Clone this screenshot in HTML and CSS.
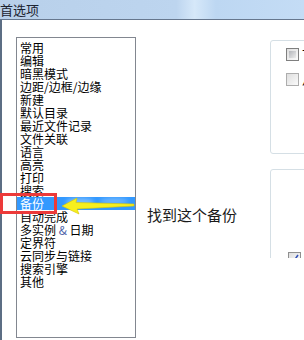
FILE: index.html
```html
<!DOCTYPE html>
<html>
  <head>
    <meta charset="UTF-8" />
    <title>首选项</title>
    <link rel="stylesheet" href="styles.css">
  </head>
  <body>
    <div class="window">
      <div class="titlebar">首选项</div>
      <div class="main">
        <ul class="list">
          <li>常用</li>
          <li>编辑</li>
          <li>暗黑模式</li>
          <li>边距/边框/边缘</li>
          <li>新建</li>
          <li>默认目录</li>
          <li>最近文件记录</li>
          <li>文件关联</li>
          <li>语言</li>
          <li>高亮</li>
          <li>打印</li>
          <li>搜索</li>
          <li class="selected">备份</li>
          <li>自动完成</li>
          <li>多实例 <span class="amp">&amp;</span> 日期</li>
          <li>定界符</li>
          <li>云同步与链接</li>
          <li>搜索引擎</li>
          <li>其他</li>
        </ul>
        <div class="note">找到这个备份</div>
        <div class="panel">
          <div class="group first">
            <div class="row"><span class="cb hot"></span><span class="label">下次启动时</span></div>
            <div class="row"><span class="cb"></span><span class="label">从备份恢复</span></div>
          </div>
          <div class="group second">
            <div class="row"><span class="cb checked">
              <svg width="11" height="11" viewBox="0 0 11 11"><path d="M2 5.5 L4.5 8.5 L9 2" fill="none" stroke="#3553b8" stroke-width="1.6" /></svg>
            </span><span class="label">启用备份</span></div>
          </div>
        </div>
      </div>

      <!-- 标注 -->
      <div class="mark"></div>
      <svg class="arrow" width="80" height="24" viewBox="0 0 80 24">
        <defs>
          <filter id="soft"><feGaussianBlur stdDeviation="2" /></filter>
        </defs>
        <ellipse cx="22" cy="8" rx="14" ry="4" fill="#ffffff" opacity="0.35" filter="url(#soft)" />
        <ellipse cx="56" cy="7" rx="14" ry="3" fill="#ffffff" opacity="0.3" filter="url(#soft)" />
        <path d="M4 12 L19 4 L18 8.5 L76 10 L76 12 L19 15 L21 20 Z" fill="#f6ef1e" stroke="#d9c400" stroke-width="0.6" />
      </svg>
    </div>
  </body>
</html>
```

FILE: styles.css
```css
body {
  margin: 0;
  background: #ffffff;
  font-family: "Noto Sans CJK SC", "Liberation Sans", sans-serif;
  color: #000;
}
.window {
  position: relative;
  width: 304px;
  height: 340px;
  overflow: hidden;
}
.titlebar {
  height: 19px;
  border-bottom: 1px solid #66778e;
  background: linear-gradient(90deg, #b8d0ea 0%, #bdd5ef 58%, #d6e8f9 64%, #bdd7f2 71%, #c4dcf5 100%);
  font-size: 13px;
  line-height: 19px;
  color: #1c2330;
}
.main {
  display: flex;
  height: 320px;
  border-left: 2px solid #5c6e84;
  padding-left: 14px;
  box-sizing: border-box;
}
.list {
  list-style: none;
  margin: 17px 0 0;
  padding: 3px 0 0;
  width: 120px;
  height: 301px;
  flex-shrink: 0;
  border: 1px solid #828790;
  box-sizing: border-box;
  font-size: 12px;
  line-height: 13px;
}
.list li {
  height: 13px;
  padding-left: 3px;
  white-space: nowrap;
}
.list .selected {
  background: #3399ff;
  color: #ffffff;
}
.amp {
  color: #4a5fa8;
}
.note {
  width: 134px;
  flex-shrink: 0;
  box-sizing: border-box;
  padding: 185px 0 0 11px;
  font-size: 15px;
  line-height: 20px;
  color: #1a1a1a;
}
.panel {
  flex: 1;
  min-width: 0;
  height: 238px;
  padding-top: 20px;
  box-sizing: border-box;
  overflow: hidden;
}
.group {
  width: 120px;
  border: 1px solid #d5dfe5;
  border-radius: 3px;
  box-sizing: border-box;
  padding-left: 15px;
}
.group.first {
  height: 114px;
  padding-top: 7px;
  margin-bottom: 15px;
}
.group.second {
  height: 160px;
  padding-top: 82px;
  padding-left: 17px;
}
.row {
  display: flex;
  align-items: center;
  gap: 3px;
  height: 13px;
  margin-bottom: 12px;
  font-size: 12px;
  white-space: nowrap;
}
.cb {
  display: flex;
  align-items: center;
  justify-content: center;
  width: 13px;
  height: 13px;
  flex-shrink: 0;
  box-sizing: border-box;
  border: 1px solid #adadad;
  background: linear-gradient(135deg, #dedede, #fbfbfb);
}
.cb.hot {
  border-color: #7f7f7f;
}
.cb.hot::after {
  content: "";
  width: 7px;
  height: 7px;
  background: linear-gradient(135deg, #b4b6bb, #ececec);
}
.cb.checked {
  border-color: #8f8f8f;
}
.mark {
  position: absolute;
  left: 0;
  top: 193px;
  width: 57px;
  height: 21px;
  border: 3px solid #ec3a3a;
  box-sizing: border-box;
}
.arrow {
  position: absolute;
  left: 58px;
  top: 194px;
}
```
